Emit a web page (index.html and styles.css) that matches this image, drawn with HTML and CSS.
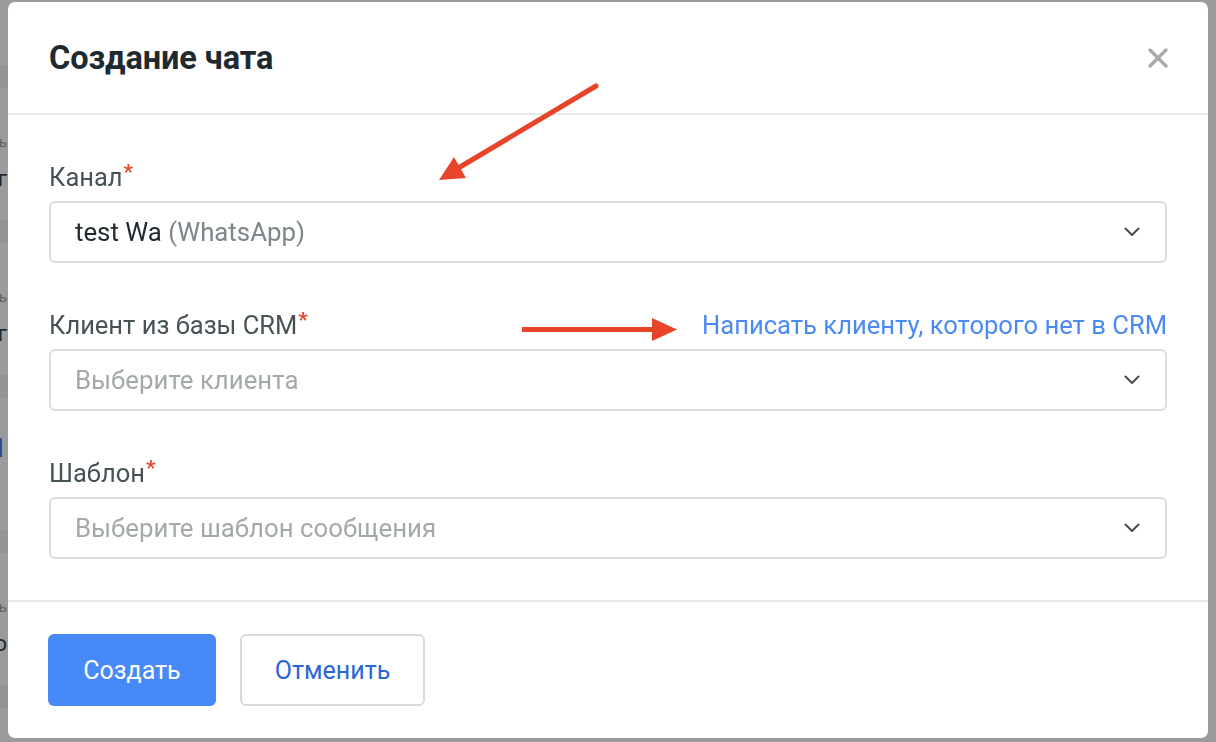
FILE: index.html
```html
<!DOCTYPE html>
<html lang="ru">
<head>
    <meta charset="utf-8">
    <title>Создание чата</title>
    <link rel="stylesheet" href="styles.css">
</head>
<body>
    <!-- страница под модалкой -->
    <div class="page">
        <div class="page-row">
            <div class="row-band"></div>
            <div class="row-body">
                <div class="row-label">Контроль</div>
                <div class="row-value">Отдел г</div>
            </div>
        </div>
        <div class="page-row">
            <div class="row-band"></div>
            <div class="row-body">
                <div class="row-label">Контроль</div>
                <div class="row-value">Отдел г</div>
            </div>
        </div>
        <div class="page-row">
            <div class="row-band"></div>
            <div class="row-body">
                <div class="row-num">21</div>
            </div>
        </div>
        <div class="page-row">
            <div class="row-band"></div>
            <div class="row-body">
                <div class="row-label">Контроль</div>
                <div class="row-value">Авто</div>
            </div>
        </div>
        <div class="page-row page-row-last">
            <div class="row-band"></div>
        </div>
    </div>

    <div class="overlay">
        <div class="modal">
            <div class="modal-header">
                <h1 class="modal-title">Создание чата</h1>
                <button class="modal-close" type="button">
                    <svg width="20" height="20" viewBox="0 0 20 20">
                        <path d="M2 2L18 18M18 2L2 18" stroke="#a6aaac" stroke-width="3.2" stroke-linecap="round"/>
                    </svg>
                </button>
            </div>

            <div class="modal-body">
                <div class="field">
                    <div class="field-head">
                        <span class="field-label">Канал<span class="req">*</span></span>
                    </div>
                    <div class="select">
                        <span class="select-value">test Wa <span class="select-note">(WhatsApp)</span></span>
                        <svg class="chevron" width="16" height="10" viewBox="0 0 16 10"><path d="M1.5 1.5L8 8L14.5 1.5" fill="none" stroke="#454d51" stroke-width="2" stroke-linecap="round" stroke-linejoin="round"/></svg>
                    </div>
                </div>

                <div class="field">
                    <div class="field-head">
                        <span class="field-label">Клиент из базы CRM<span class="req">*</span></span>
                        <a class="field-link" href="#">Написать клиенту, которого нет в CRM</a>
                    </div>
                    <div class="select">
                        <span class="select-placeholder">Выберите клиента</span>
                        <svg class="chevron" width="16" height="10" viewBox="0 0 16 10"><path d="M1.5 1.5L8 8L14.5 1.5" fill="none" stroke="#454d51" stroke-width="2" stroke-linecap="round" stroke-linejoin="round"/></svg>
                    </div>
                </div>

                <div class="field">
                    <div class="field-head">
                        <span class="field-label">Шаблон<span class="req">*</span></span>
                    </div>
                    <div class="select">
                        <span class="select-placeholder">Выберите шаблон сообщения</span>
                        <svg class="chevron" width="16" height="10" viewBox="0 0 16 10"><path d="M1.5 1.5L8 8L14.5 1.5" fill="none" stroke="#454d51" stroke-width="2" stroke-linecap="round" stroke-linejoin="round"/></svg>
                    </div>
                </div>
            </div>

            <div class="modal-footer">
                <button class="btn btn-primary" type="button">Создать</button>
                <button class="btn btn-default" type="button">Отменить</button>
            </div>
        </div>
    </div>

    <!-- стрелки-пометки поверх скриншота -->
    <svg class="marks" width="1216" height="742" viewBox="0 0 1216 742">
        <line x1="596" y1="86" x2="455" y2="170" stroke="#e8442a" stroke-width="5" stroke-linecap="round"/>
        <polygon points="439,180 454,157 466,178" fill="#e8442a"/>
        <line x1="522" y1="329.5" x2="656" y2="329.5" stroke="#e8442a" stroke-width="5"/>
        <polygon points="652,318 677,329.5 652,341" fill="#e8442a"/>
    </svg>
</body>
</html>
```

FILE: styles.css
```css
* {
    box-sizing: border-box;
}
body {
    margin: 0;
    width: 1216px;
    height: 742px;
    overflow: hidden;
    font-family: Roboto, "Noto Sans", sans-serif;
    background-color: #f3f4f5;
}

/* страница под затемнением */
.page {
    padding-top: 65px;
    margin-left: -120px;
    width: 128px;
    text-align: right;
}
.page-row {
    height: 155px;
}
.page-row-last {
    height: 57px;
}
.row-band {
    height: 23px;
    background-color: #e6e8ea;
}
.row-body {
    padding-top: 44px;
    padding-right: 1px;
}
.row-label {
    font-size: 15px;
    color: #8b9195;
    line-height: 20px;
}
.row-value {
    font-size: 22px;
    color: #26313a;
    margin-top: 14px;
}
.row-num {
    font-size: 26px;
    line-height: 30px;
    color: #2f6bd8;
    margin-top: -9px;
}

.overlay {
    position: fixed;
    inset: 0;
    background-color: rgba(30, 32, 34, 0.42);
    display: flex;
    padding: 2px 8px 4px 8px;
}

.modal {
    width: 1200px;
    height: 736px;
    background-color: white;
    border-radius: 7px;
    display: flex;
    flex-direction: column;
}
.modal-header {
    height: 113px;
    flex: 0 0 auto;
    display: flex;
    align-items: center;
    justify-content: space-between;
    padding: 0 38px 0 41px;
    border-bottom: 2px solid #e8e8e8;
}
.modal-title {
    margin: 0;
    font-size: 32.5px;
    font-weight: 700;
    color: #1f2a30;
    letter-spacing: -0.1px;
}
.modal-close {
    border: none;
    background: none;
    padding: 0;
    width: 24px;
    height: 24px;
    display: flex;
    align-items: center;
    justify-content: center;
    cursor: pointer;
}

.modal-body {
    flex: 1 1 auto;
    padding: 47px 41px 0 41px;
    display: flex;
    flex-direction: column;
    gap: 47px;
}
.field-head {
    display: flex;
    justify-content: space-between;
    align-items: baseline;
    height: 30px;
    margin-bottom: 9px;
}
.field-label {
    font-size: 25.5px;
    line-height: 30px;
    color: #475256;
}
.req {
    color: #e5492b;
    font-size: 21px;
    font-weight: 700;
    line-height: 1;
    vertical-align: top;
    margin-left: 1px;
}
.field-link {
    font-size: 25.6px;
    line-height: 30px;
    color: #4a8af4;
    text-decoration: none;
}
.select {
    height: 62px;
    border: 2px solid #dcdcdc;
    border-radius: 6px;
    display: flex;
    align-items: center;
    justify-content: space-between;
    padding: 0 25px 0 24px;
    font-size: 25.8px;
}
.select-value {
    color: #1e2a2f;
}
.select-note {
    color: #7d8689;
}
.select-placeholder {
    color: #a3a9ab;
}

.modal-footer {
    flex: 0 0 auto;
    border-top: 2px solid #e8e8e8;
    padding: 32px 40px 32px 40px;
    display: flex;
    gap: 24px;
}
.btn {
    height: 72px;
    border-radius: 6px;
    font-family: Roboto, "Noto Sans", sans-serif;
    font-size: 25px;
    cursor: pointer;
}
.btn-primary {
    width: 168px;
    background-color: #4889f8;
    color: white;
    border: none;
}
.btn-default {
    width: 185px;
    background-color: white;
    color: #2b65d9;
    border: 2px solid #d9d9d9;
}

.marks {
    position: absolute;
    top: 0;
    left: 0;
    pointer-events: none;
}
```
